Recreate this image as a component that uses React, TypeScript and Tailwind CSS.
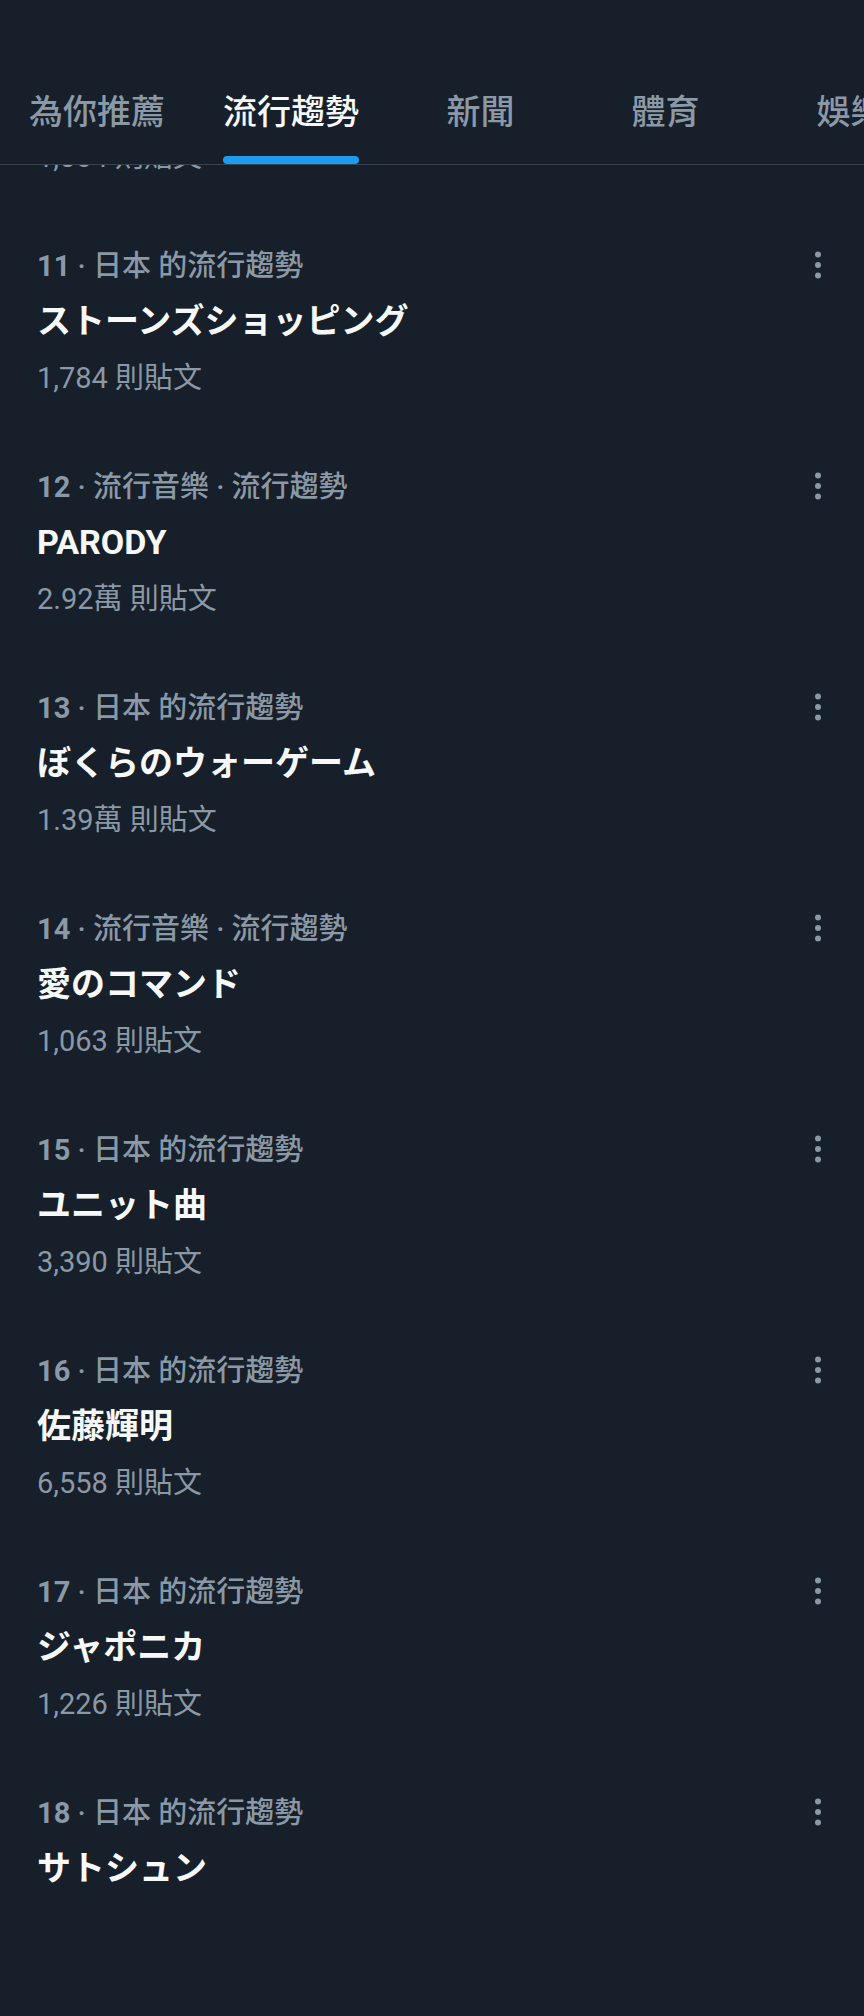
import { EllipsisVertical } from "lucide-react";

const TABS = [
  { label: "為你推薦", active: false },
  { label: "流行趨勢", active: true },
  { label: "新聞", active: false },
  { label: "體育", active: false },
  { label: "娛樂", active: false },
];

const TRENDS = [
  { rank: 11, context: "日本 的流行趨勢", title: "ストーンズショッピング", posts: "1,784 則貼文" },
  { rank: 12, context: "流行音樂 · 流行趨勢", title: "PARODY", posts: "2.92萬 則貼文" },
  { rank: 13, context: "日本 的流行趨勢", title: "ぼくらのウォーゲーム", posts: "1.39萬 則貼文" },
  { rank: 14, context: "流行音樂 · 流行趨勢", title: "愛のコマンド", posts: "1,063 則貼文" },
  { rank: 15, context: "日本 的流行趨勢", title: "ユニット曲", posts: "3,390 則貼文" },
  { rank: 16, context: "日本 的流行趨勢", title: "佐藤輝明", posts: "6,558 則貼文" },
  { rank: 17, context: "日本 的流行趨勢", title: "ジャポニカ", posts: "1,226 則貼文" },
  { rank: 18, context: "日本 的流行趨勢", title: "サトシュン", posts: "" },
];

const TC = { fontFamily: '"Roboto", "Noto Sans CJK TC", sans-serif' };
const JP = { fontFamily: '"Roboto", "Noto Sans CJK JP", sans-serif' };

const App = () => {
  return (
    <div className="min-h-[2016px] w-[864px] bg-[#161f2a] overflow-hidden" style={TC}>
      {/* Tabs header */}
      <div className="h-[165px] flex items-end border-b border-[#38444d] overflow-hidden">
        <div className="flex flex-none">
          {TABS.map((tab) => (
            <div key={tab.label} className="flex-none min-w-[185px] px-[29px] flex justify-center">
              <div className="inline-flex flex-col">
                <span
                  className={`text-[34px] leading-[44px] font-medium whitespace-nowrap ${
                    tab.active ? "text-[#f7f9f9]" : "text-[#8b98a5]"
                  }`}
                >
                  {tab.label}
                </span>
                <div
                  className={`mt-[22px] h-[8px] rounded-full ${tab.active ? "bg-[#1d9bf0]" : "bg-transparent"}`}
                />
              </div>
            </div>
          ))}
        </div>
      </div>

      {/* previous item, scrolled under the header */}
      <div className="h-[16px] overflow-hidden flex flex-col justify-end pl-[37px] mb-[31px]">
        <div className="flex-none text-[29px] leading-[48px] text-[#8b98a5]">1,564 則貼文</div>
      </div>

      {/* Trends list */}
      <div className="flex flex-col">
        {TRENDS.map((t) => (
          <div key={t.rank} className="flex justify-between pl-[37px] pr-[28px] pt-[32px] pb-[31px]">
            <div className="flex flex-col">
              <div className="text-[29px] leading-[44px] font-medium text-[#8b98a5] whitespace-nowrap">
                <span className="font-bold">{t.rank}</span>
                <span> · {t.context}</span>
              </div>
              <div className="text-[34px] leading-[66px] font-bold text-[#f7f9f9] whitespace-nowrap" style={JP}>
                {t.title}
              </div>
              {t.posts && (
                <div className="text-[29px] leading-[48px] text-[#8b98a5] whitespace-nowrap">{t.posts}</div>
              )}
            </div>
            <EllipsisVertical className="mt-[3px] w-[36px] h-[36px] text-[#8b98a5] flex-none" />
          </div>
        ))}
      </div>
    </div>
  );
};

export default App;
